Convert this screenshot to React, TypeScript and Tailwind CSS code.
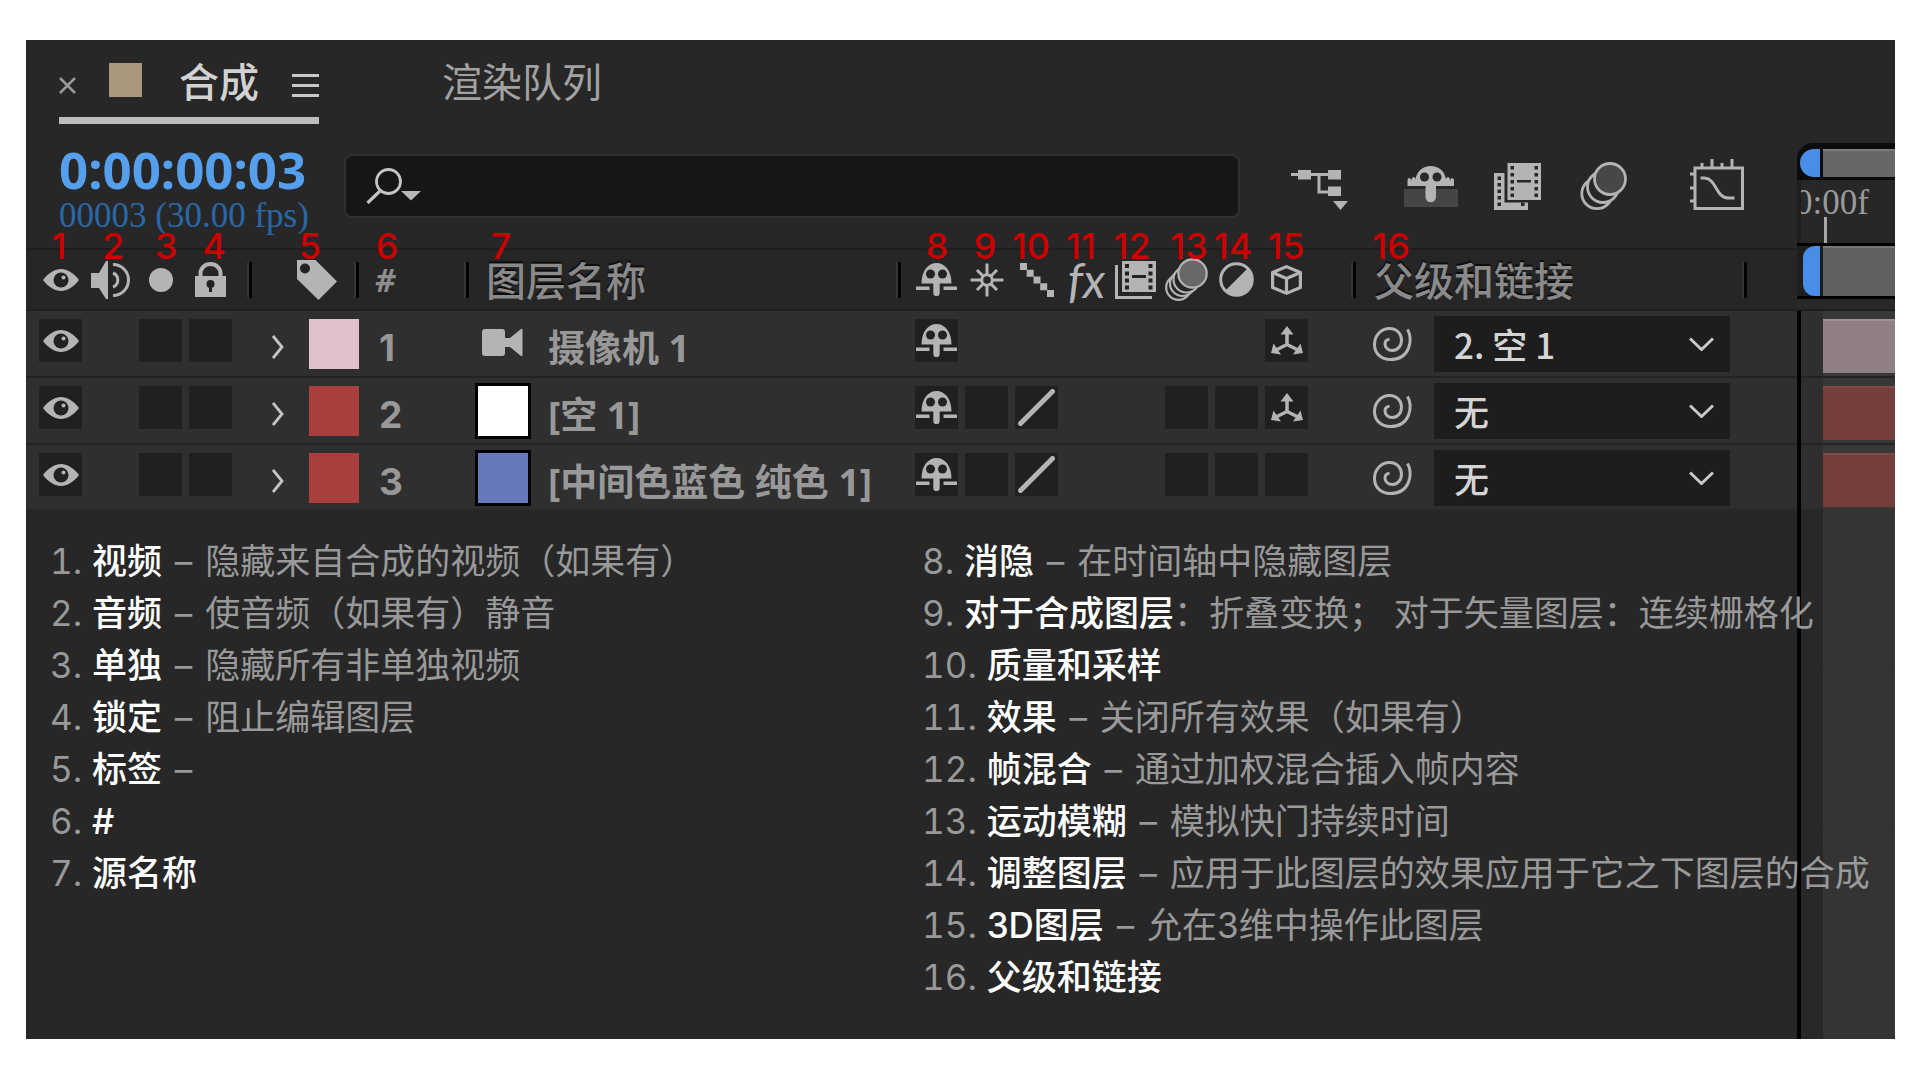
import type { ReactNode } from 'react';
import { clsx } from 'clsx';

interface IconProps {
  className?: string;
}

const EyeIcon = () => (
  <svg width="36" height="24" viewBox="0 0 36 24">
    <path
      d="M0 12C6 4.5 12 1 18 1S30 4.5 36 12C30 19.5 24 23 18 23S6 19.5 0 12Z"
      fill="#b4b4b4"
    />
    <circle cx="18" cy="12" r="7.5" fill="#222" />
    <circle cx="20.5" cy="9.5" r="2" fill="#b4b4b4" />
  </svg>
);

const AudioIcon = () => (
  <svg width="39" height="38" viewBox="0 0 39 38">
    <path d="M0 12h8L15 0h2v38h-2L8 27H0Z" fill="#b4b4b4" />
    <path
      d="M22 12a7.5 7.5 0 0 1 0 14M22 3.5a15.5 15.5 0 0 1 0 31"
      fill="none"
      stroke="#b4b4b4"
      strokeWidth="3"
    />
  </svg>
);

const SoloIcon = () => (
  <svg width="24" height="24" viewBox="0 0 24 24">
    <circle cx="12" cy="12" r="12" fill="#b4b4b4" />
  </svg>
);

const LockIcon = () => (
  <svg width="31" height="35" viewBox="0 0 31 35">
    <path d="M5.500 15V11.500a10 9.500 0 0 1 20 0V15" fill="none" stroke="#b4b4b4" strokeWidth="4" />
    <rect y="14" width="31" height="21" fill="#b4b4b4" />
    <circle cx="15.500" cy="22" r="4" fill="#222" />
    <path d="M14 22h3v8h-3Z" fill="#222" />
  </svg>
);

const TagIcon = () => (
  <svg width="40" height="40" viewBox="0 0 40 40">
    <path d="M0 0h18.500L40 21.500 21.500 40 0 19Z" fill="#b4b4b4" />
    <circle cx="8" cy="8.500" r="5" fill="#222" />
  </svg>
);

const ShyIcon = () => (
  <svg width="41" height="33" viewBox="0 0 41 33">
    <path d="M5.500 20.500C5.500 8 12 0 20.500 0S35.500 8 35.500 20.500Z" fill="#b4b4b4" />
    <path d="M17.300 18h6.400v12a3.200 3.200 0 0 1-6.400 0Z" fill="#b4b4b4" />
    <path d="M0 23.500h13.500v3.500H0ZM27.500 23.500H41v3.500H27.500Z" fill="#b4b4b4" />
    <circle cx="14.500" cy="11" r="4.500" fill="#222" />
    <circle cx="26.500" cy="11" r="4.500" fill="#222" />
  </svg>
);

const SunIcon = () => (
  <svg width="34" height="34" viewBox="0 0 34 34" fill="none" stroke="#b4b4b4" strokeWidth="3">
    <circle cx="17" cy="17" r="5.300" />
    <path d="M17 .5v11M17 22.500v11M.5 17h11M22.500 17h11M7 7l6 6M21 21l6 6M27 7l-6 6M13 21l-6 6" />
  </svg>
);

const QualityIcon = () => (
  <svg width="34" height="34" viewBox="0 0 34 34" fill="#b4b4b4">
    <path d="M0 0h7v7H0ZM6.700 6.700h7v7h-7ZM13.500 13.500h7v7h-7ZM20.200 20.200h7v7h-7ZM27 27h7v7h-7Z" />
  </svg>
);

const FilmIcon = () => (
  <svg width="43" height="38" viewBox="0 0 43 38">
    <path d="M1.500 4v32.500H37" fill="none" stroke="#b4b4b4" strokeWidth="3" />
    <rect x="7" width="34" height="31" fill="#b4b4b4" />
    <path
      d="M10 3h4v4h-4ZM10 10.500h4v4h-4ZM10 17.500h4v4h-4ZM10 24.500h4v4h-4ZM33.500 3h4v4h-4ZM33.500 10.500h4v4h-4ZM33.500 17.500h4v4h-4ZM33.500 24.500h4v4h-4ZM17 14h14v3H17Z"
      fill="#222"
    />
  </svg>
);

const MotionBlurIcon = () => (
  <svg width="43" height="43" viewBox="0 0 43 43" stroke="#b4b4b4" strokeWidth="2.200">
    <circle cx="13.500" cy="29.500" r="12.300" fill="#262626" />
    <circle cx="17.500" cy="25.500" r="12.500" fill="#262626" />
    <circle cx="21.500" cy="21.500" r="13" fill="#262626" />
    <circle cx="27.500" cy="15.500" r="14.200" fill="#686868" />
  </svg>
);

const AdjustmentIcon = () => (
  <svg width="35" height="35" viewBox="0 0 35 35">
    <circle cx="17.500" cy="17.500" r="15.800" fill="none" stroke="#b4b4b4" strokeWidth="3" />
    <path d="M29 6A16.200 16.200 0 0 1 6 29Z" fill="#b4b4b4" />
  </svg>
);

const CubeIcon = () => (
  <svg
    width="31"
    height="30"
    viewBox="0 0 31 30"
    fill="none"
    stroke="#b4b4b4"
    strokeWidth="3.200"
    strokeLinejoin="round">
    <path d="M15.500 1.600 29.400 7.500v15l-13.900 5.900-13.900-5.900v-15ZM1.600 7.500l13.900 6 13.900-6M15.500 13.500v15" />
  </svg>
);

const AxesIcon = () => (
  <svg width="32" height="29" viewBox="0 0 32 29">
    <path d="M16 6v12.500L4 24.500M16 18.500l12 6" fill="none" stroke="#b4b4b4" strokeWidth="3.500" />
    <path
      d="M16 0l6.500 8.500h-13ZM2.500 17.500l7.500 11L0 27ZM29.500 17.500 32 27l-10 1.500Z"
      fill="#b4b4b4"
    />
  </svg>
);

const DraftLineIcon = () => (
  <svg width="37" height="37" viewBox="0 0 37 37">
    <path d="M2.500 34.500l32-32" stroke="#b4b4b4" strokeWidth="5" strokeLinecap="round" />
  </svg>
);

const PickWhipIcon = () => (
  <svg width="39" height="34" viewBox="0 0 39 34" fill="none" stroke="#b4b4b4" strokeWidth="3">
    <path d="M34.500 2.500C40.500 12 37 32.500 17.500 32.500 7.500 32.500 1.500 26 1.500 17.500 1.500 8 8.500 1.500 16.500 1.500c7.500 0 12 5.500 12 11.500 0 6-4 10.500-9 10.500-4.500 0-7.500-3-7.500-6.500 0-3 2-4.500 4.500-4.800" />
  </svg>
);

const CameraIcon = () => (
  <svg width="41" height="27" viewBox="0 0 41 27" fill="#b4b4b4">
    <rect width="23" height="27" rx="3" />
    <path d="M23 9h5L39 0h1.500v27H39L28 18h-5Z" />
  </svg>
);

const TwirlIcon = () => (
  <svg width="12" height="24" viewBox="0 0 12 24">
    <path d="M1 1l9 11-9 11" fill="none" stroke="#c4c4c4" strokeWidth="2.800" />
  </svg>
);

const ChevronDownIcon = ({ className }: IconProps) => (
  <svg className={className} width="25" height="14" viewBox="0 0 25 14">
    <path d="M1 1.500l11.500 11L24 1.500" fill="none" stroke="#c8c8c8" strokeWidth="3" />
  </svg>
);

const SearchIcon = () => (
  <svg width="56" height="36" viewBox="0 0 56 36">
    <circle cx="22.500" cy="13.500" r="12" fill="none" stroke="#c4c4c4" strokeWidth="2.800" />
    <path d="M14.500 22.500L1.500 35" stroke="#c4c4c4" strokeWidth="3.200" />
    <path d="M35 23h20L45 32.500Z" fill="#b8b8b8" />
  </svg>
);

const FlowchartIcon = () => (
  <svg width="58" height="52" viewBox="0 0 58 52" fill="#b4b4b4">
    <path d="M1 15.500h40M29 15.500V33h10" fill="none" stroke="#b4b4b4" strokeWidth="3" />
    <path d="M8 11h13v9.500H8ZM38 11h13v9.500H38ZM38 27.500h13V37H38ZM43 42h15l-7.500 9Z" />
  </svg>
);

const HideShyIcon = () => (
  <svg width="54" height="52" viewBox="0 0 54 52">
    <path d="M0 30h54v18H0Z" fill="#454545" />
    <path
      d="M3.500 27v-5q0-3 1.800-3t1.700 3q1-4 2.500-4t2 2C13 12 19 7 26.800 7S40.500 12 42 20q.5-2 2-2t2.500 4q0-3 1.700-3t1.800 3v5Z"
      fill="#b4b4b4"
    />
    <path d="M21.500 24h10.500v14a5 5 0 0 1-10.500 0Z" fill="#b4b4b4" />
    <circle cx="20.500" cy="18" r="4.500" fill="#272727" />
    <circle cx="33" cy="18" r="4.500" fill="#272727" />
  </svg>
);

const FrameBlendIcon = () => (
  <svg width="47" height="52" viewBox="0 0 47 52">
    <path d="M0 14h10.500v29.500H34V51H0Z" fill="#b4b4b4" />
    <path d="M13.500 4H47v37H13.500Z" fill="#b4b4b4" />
    <path
      d="M3.500 17.500h3.500v3.500H3.500ZM3.500 24h3.500v3.500H3.500ZM3.500 30.500h3.500v3.500H3.500ZM3.500 37h3.500v3.500H3.500ZM3.500 43.500h3.500V47H3.500ZM27 43.500h3.500V47H27ZM16.500 7h3.500v3.500h-3.500ZM16.500 14h3.500v3.500h-3.500ZM16.500 21h3.500v3.500h-3.500ZM16.500 28h3.500v3.500h-3.500ZM16.500 34.500h3.500V38h-3.500ZM40.500 7H44v3.500h-3.500ZM40.500 14H44v3.500h-3.500ZM40.500 21H44v3.500h-3.500ZM40.500 28H44v3.500h-3.500ZM40.500 34.500H44V38h-3.500ZM23 21h14v2.500H23Z"
      fill="#272727"
    />
  </svg>
);

const EnableBlurIcon = () => (
  <svg width="47" height="52" viewBox="0 0 47 52" stroke="#b4b4b4" strokeWidth="2.800">
    <circle cx="17" cy="34.500" r="15.200" fill="#272727" />
    <circle cx="23" cy="28" r="15.500" fill="#272727" />
    <circle cx="30" cy="20" r="15.500" fill="#474747" />
  </svg>
);

const GraphEditorIcon = () => (
  <svg width="54" height="52" viewBox="0 0 54 52" fill="none" stroke="#b4b4b4" strokeWidth="3">
    <path d="M5 9h47.500v40.500H5Z" />
    <path d="M12 4v5M22 0v9M32 4v5M42 0v9M0 15h5M0 29h5M0 42h5" />
    <path d="M10.500 19h4C27 20 25 39 39 39h5.500" />
  </svg>
);

interface Layer {
  index: number;
  name: string;
  label: string;
  bar: string;
  source: 'camera' | 'white' | 'blue';
  parent: string;
  switches: ('shy' | 'empty' | 'draft' | 'axes' | null)[];
}

const layers: Layer[] = [
  {
    index: 1,
    name: '摄像机 1',
    label: 'bg-[#dfc0cb]',
    bar: 'bg-[#8f7e84] border-t-[#a08f95]',
    source: 'camera',
    parent: '2. 空 1',
    switches: ['shy', null, null, null, null, null, null, 'axes'],
  },
  {
    index: 2,
    name: '[空 1]',
    label: 'bg-[#a9403d]',
    bar: 'bg-[#733e3b] border-t-[#804a47]',
    source: 'white',
    parent: '无',
    switches: ['shy', 'empty', 'draft', null, null, 'empty', 'empty', 'axes'],
  },
  {
    index: 3,
    name: '[中间色蓝色 纯色 1]',
    label: 'bg-[#a9403d]',
    bar: 'bg-[#733e3b] border-t-[#804a47]',
    source: 'blue',
    parent: '无',
    switches: ['shy', 'empty', 'draft', null, null, 'empty', 'empty', 'empty'],
  },
];

const switchHeaders = [
  { title: '消隐', icon: <ShyIcon /> },
  { title: '折叠变换', icon: <SunIcon /> },
  { title: '质量和采样', icon: <QualityIcon /> },
  {
    title: '效果',
    icon: <span className="font-[Lato] text-[48px] leading-10 font-normal text-[#b4b4b4] italic">fx</span>,
  },
  { title: '帧混合', icon: <FilmIcon /> },
  { title: '运动模糊', icon: <MotionBlurIcon /> },
  { title: '调整图层', icon: <AdjustmentIcon /> },
  { title: '3D图层', icon: <CubeIcon /> },
];

// centre of every marker, measured from the left edge of its group
const leftMarkers = [
  { n: 1, x: 33 },
  { n: 2, x: 87 },
  { n: 3, x: 140 },
  { n: 4, x: 188 },
  { n: 5, x: 284 },
  { n: 6, x: 361 },
  { n: 7, x: 475 },
];

const rightMarkers = [
  { n: 8, x: 36 },
  { n: 9, x: 84 },
  { n: 10, x: 130 },
  { n: 11, x: 180 },
  { n: 12, x: 231 },
  { n: 13, x: 288 },
  { n: 14, x: 332 },
  { n: 15, x: 385 },
  { n: 16, x: 490 },
];

interface LegendItem {
  title: string;
  text?: string;
  dash?: boolean;
}

const leftLegend: LegendItem[] = [
  { title: '视频', dash: true, text: '隐藏来自合成的视频（如果有）' },
  { title: '音频', dash: true, text: '使音频（如果有）静音' },
  { title: '单独', dash: true, text: '隐藏所有非单独视频' },
  { title: '锁定', dash: true, text: '阻止编辑图层' },
  { title: '标签', dash: true },
  { title: '#' },
  { title: '源名称' },
];

const rightLegend: LegendItem[] = [
  { title: '消隐', dash: true, text: '在时间轴中隐藏图层' },
  { title: '对于合成图层', text: '：折叠变换； 对于矢量图层：连续栅格化' },
  { title: '质量和采样' },
  { title: '效果', dash: true, text: '关闭所有效果（如果有）' },
  { title: '帧混合', dash: true, text: '通过加权混合插入帧内容' },
  { title: '运动模糊', dash: true, text: '模拟快门持续时间' },
  { title: '调整图层', dash: true, text: '应用于此图层的效果应用于它之下图层的合成' },
  { title: '3D图层', dash: true, text: '允在3维中操作此图层' },
  { title: '父级和链接' },
];

const Separator = () => (
  <span className="h-9 w-[3px] shrink-0 bg-black shadow-[-2px_0_0_#343434]" />
);

const Markers = ({ items, className }: { items: typeof leftMarkers; className?: string }) => (
  <div className={clsx('pointer-events-none absolute top-[-20px] z-10', className)}>
    {items.map(({ n, x }) => (
      <span
        key={n}
        style={{ left: x }}
        className="absolute -translate-x-1/2 font-[Inter] text-[36px] leading-9 font-medium text-[#cc0000]">
        {n}
      </span>
    ))}
  </div>
);

const SwitchCell = ({ label, children }: { label: string; children?: ReactNode }) => (
  <button
    type="button"
    aria-label={label}
    className="flex h-[43px] w-[43px] shrink-0 items-center justify-center bg-[#202020]">
    {children}
  </button>
);

const Tabs = () => (
  <div className="flex h-[84px] items-start pt-2 pl-[33px]">
    <div className="flex h-[76px] w-[260px] items-center border-b-[7px] border-[#bdbdbd] pb-[6px]">
      <button type="button" aria-label="关闭" className="mt-3 w-[17px]">
        <svg width="17" height="17" viewBox="0 0 17 17">
          <path d="M1 1l15 15M16 1L1 16" stroke="#9a9a9a" strokeWidth="2.500" />
        </svg>
      </button>
      <span className="ml-[33px] h-[34px] w-[33px] bg-[#a8977a]" />
      <button type="button" className="ml-[37px] text-[40px] leading-[60px] font-medium text-[#d2d2d2]">
        合成
      </button>
      <button type="button" aria-label="菜单" className="mt-3 ml-auto flex w-[27px] flex-col gap-[7px]">
        <span className="h-[3px] bg-[#c8c8c8]" />
        <span className="h-[3px] bg-[#c8c8c8]" />
        <span className="h-[3px] bg-[#c8c8c8]" />
      </button>
    </div>
    <button type="button" className="ml-[123px] h-[64px] text-[40px] leading-[60px] text-[#a2a2a2]">
      渲染队列
    </button>
  </div>
);

const Toolbar = () => (
  <div className="flex h-[124px] items-start pl-[33px]">
    <div className="w-[285px] shrink-0 pt-[22px] whitespace-nowrap">
      <div className="font-['Noto_Sans'] text-[51px] leading-[46px] font-bold text-[#559fec]">
        0:00:00:03
      </div>
      <div className="font-['Liberation_Serif'] text-[35px] leading-12 text-[#2a67a8]">
        00003 (30.00 fps)
      </div>
    </div>
    <label className="mt-[30px] flex h-16 min-w-0 flex-1 items-center rounded-lg border-2 border-[#303030] bg-[#161616] pl-5">
      <SearchIcon />
      <input
        type="text"
        aria-label="搜索"
        className="ml-3 min-w-0 flex-1 bg-transparent text-[34px] text-[#d2d2d2] outline-none"
      />
    </label>
    <div className="mt-[35px] mr-[53px] ml-[50px] flex shrink-0">
      <button type="button" aria-label="合成微型流程图" className="mr-10">
        <FlowchartIcon />
      </button>
      <button type="button" aria-label="隐藏消隐图层" className="flex w-[86px] justify-center">
        <HideShyIcon />
      </button>
      <button type="button" aria-label="启用帧混合" className="flex w-[86px] justify-center">
        <FrameBlendIcon />
      </button>
      <button type="button" aria-label="启用运动模糊" className="flex w-[86px] justify-center">
        <EnableBlurIcon />
      </button>
      <button type="button" aria-label="图表编辑器" className="ml-11">
        <GraphEditorIcon />
      </button>
    </div>
  </div>
);

const headCell = 'h-[63px] border-y-2 border-[#1e1e1e] bg-[#262626] p-0 text-left font-normal';
const headText =
  'pt-[2px] text-[40px] leading-[56px] font-medium text-[#8a8a8a] [text-shadow:0_-2px_1px_#0c0c0c]';

const SourceIcon = ({ source }: { source: Layer['source'] }) => {
  if (source === 'camera') {
    return (
      <span className="flex h-14 w-14 items-center pb-[3px] pl-[7px]">
        <CameraIcon />
      </span>
    );
  }
  return (
    <span
      className={clsx(
        'h-14 w-14 border-[3px] border-black',
        source === 'white' ? 'bg-white' : 'bg-[#6679bd]',
      )}
    />
  );
};

const LayerRow = ({ layer }: { layer: Layer }) => (
  <tr className="h-[67px] bg-[#2f2f2f] align-top last:h-16 [&>td]:border-b-2 [&>td]:border-[#232323] last:[&>td]:border-b-0">
    <td className="p-0">
      <div className="flex gap-[7px] pt-2 pl-[13px]">
        <SwitchCell label="视频">
          <EyeIcon />
        </SwitchCell>
        <span className="w-[43px]" />
        <SwitchCell label="单独" />
        <SwitchCell label="锁定" />
      </div>
    </td>
    <td className="p-0">
      <div className="flex justify-between pt-2 pl-5">
        <button type="button" aria-label="展开" className="pt-[5px]">
          <TwirlIcon />
        </button>
        <span className={clsx('h-[50px] w-[50px]', layer.label)} />
      </div>
    </td>
    <td className="p-0 pt-[11px] pl-5 font-[Inter] text-[37px] leading-[52px] font-bold text-[#989898]">
      {layer.index}
    </td>
    <td className="p-0">
      <div className="flex pt-[5px] pl-[6px]">
        <SourceIcon source={layer.source} />
        <span className="ml-[17px] pt-[6px] text-[37px] leading-[52px] font-bold whitespace-nowrap text-[#989898]">
          {layer.name}
        </span>
      </div>
    </td>
    <td className="p-0">
      <div className="flex gap-[7px] pt-2 pl-[14px]">
        {layer.switches.map((kind, i) =>
          kind ? (
            <SwitchCell key={i} label={switchHeaders[i].title}>
              {kind === 'shy' && <ShyIcon />}
              {kind === 'draft' && <DraftLineIcon />}
              {kind === 'axes' && <AxesIcon />}
            </SwitchCell>
          ) : (
            <span key={i} className="w-[43px]" />
          ),
        )}
      </div>
    </td>
    <td className="p-0">
      <div className="flex pt-[5px] pl-[17px]">
        <button type="button" aria-label="父级关联器" className="h-14">
          <PickWhipIcon />
        </button>
        <div className="relative ml-[22px]">
          <select
            aria-label="父级"
            defaultValue={layer.parent}
            className="h-14 w-[296px] appearance-none bg-[#1d1d1d] pl-5 font-['Noto_Sans_CJK_SC',sans-serif] text-[35px] leading-[52px] font-medium text-[#d4d4d4]">
            <option>{layer.parent}</option>
          </select>
          <ChevronDownIcon className="pointer-events-none absolute top-[21px] right-4" />
        </div>
      </div>
    </td>
  </tr>
);

const LayerTable = () => (
  <div className="relative">
    <Markers items={leftMarkers} className="left-0" />
    <Markers items={rightMarkers} className="right-0 w-[896px]" />
    <table className="w-full table-fixed border-separate border-spacing-0 font-['Noto_Sans','Noto_Sans_CJK_SC',sans-serif]">
      <colgroup>
        <col className="w-[226px]" />
        <col className="w-[107px]" />
        <col className="w-[110px]" />
        <col />
        <col className="w-[455px]" />
        <col className="w-[441px]" />
      </colgroup>
      <thead>
        <tr>
          <th className={headCell}>
            <div className="flex items-center pl-[13px]">
              <div className="flex flex-1 gap-[7px] [&>span]:flex [&>span]:w-[43px] [&>span]:items-center [&>span]:justify-center">
                <span>
                  <EyeIcon />
                </span>
                <span>
                  <AudioIcon />
                </span>
                <span>
                  <SoloIcon />
                </span>
                <span>
                  <LockIcon />
                </span>
              </div>
              <Separator />
            </div>
          </th>
          <th className={headCell}>
            <div className="flex items-center justify-between pl-[45px]">
              <TagIcon />
              <Separator />
            </div>
          </th>
          <th className={headCell}>
            <div className="flex items-center justify-between pl-4">
              <span className="text-[32px] leading-[56px] font-bold text-[#8e8e8e] italic">#</span>
              <Separator />
            </div>
          </th>
          <th className={headCell}>
            <div className="flex items-center justify-between pl-[17px]">
              <span className={headText}>图层名称</span>
              <Separator />
            </div>
          </th>
          <th className={headCell}>
            <div className="flex items-center pl-[14px]">
              <div className="flex flex-1 gap-[7px]">
                {switchHeaders.map(({ title, icon }) => (
                  <span key={title} title={title} className="flex w-[43px] items-center justify-center">
                    {icon}
                  </span>
                ))}
              </div>
              <Separator />
            </div>
          </th>
          <th className={headCell}>
            <div className="flex items-center justify-between pr-[50px] pl-[18px]">
              <span className={headText}>父级和链接</span>
              <Separator />
            </div>
          </th>
        </tr>
      </thead>
      <tbody>
        {layers.map((layer) => (
          <LayerRow key={layer.index} layer={layer} />
        ))}
      </tbody>
    </table>
  </div>
);

const LegendList = ({
  items,
  start,
  className,
}: {
  items: LegendItem[];
  start: number;
  className?: string;
}) => (
  <ul className={className}>
    {items.map(({ title, text, dash }, i) => (
      <li key={title} className="whitespace-pre">
        <span className="tabular-nums">{start + i}.</span>{' '}
        <strong className="font-medium text-white">{title}</strong>
        {dash && <span className="mx-[3px]"> – </span>}
        {text}
      </li>
    ))}
  </ul>
);

const Legend = () => (
  <div className="relative z-10 flex pt-[26px] pb-9 pl-6 font-[Inter,'Noto_Sans_CJK_SC',sans-serif] text-[35px] leading-[52px] text-[#999]">
    <LegendList items={leftLegend} start={1} className="flex-1" />
    <LegendList items={rightLegend} start={8} className="w-[875px] shrink-0" />
  </div>
);

const TimeRuler = () => (
  <aside className="flex w-[98px] shrink-0 flex-col overflow-hidden pt-[103px]">
    <div className="flex h-[37px] gap-[3px] rounded-tl-[16px] bg-[#0c0c0c] pt-[6px] pb-[3px] pl-[3px]">
      <span className="w-5 rounded-l-full bg-[#488ee8]" />
      <span className="flex-1 border-t-2 border-[#7c7c7c] bg-[#676767]" />
    </div>
    <div className="h-[63px] overflow-hidden border-l-4 border-[#1e1e1e]">
      <div className="-ml-[6px] font-['Liberation_Serif'] text-[35px] leading-[46px] text-[#9a9a9a]">0:00f</div>
      <span className="-mt-[9px] ml-[23px] block h-[26px] w-[3px] bg-[#a8a8a8]" />
    </div>
    <div className="flex h-14 gap-[3px] border-y-[3px] border-black bg-[#1e1e1e] pl-[6px]">
      <span className="w-[17px] rounded-l-xl bg-[#488ee8]" />
      <span className="flex-1 border-t-2 border-[#757575] bg-[#616161]" />
    </div>
    <div className="h-3 border-b-2 border-[#1e1e1e] bg-[#282828]" />
    <div className="flex flex-1 flex-col border-l-4 border-black">
      {layers.map(({ index, bar }) => (
        <div
          key={index}
          className="flex h-[67px] shrink-0 border-b-2 border-[#232323] bg-[#2f2f2f] pl-[22px] nth-3:h-16 nth-3:border-b-0">
          <div className="flex-1 bg-[#383838] pt-2">
            <div className={clsx('h-[54px] border-t-2', bar)} />
          </div>
        </div>
      ))}
      <div className="flex flex-1 flex-col bg-[#282828] pl-[22px] [&>div]:bg-[#343434]">
        <div className="h-[163px] border-b border-[#303030]" />
        <div className="h-40 border-b border-[#303030]" />
        <div className="flex-1" />
      </div>
    </div>
  </aside>
);

export default function App() {
  return (
    <main className="min-h-screen bg-white py-10 pr-[25px] pl-[26px] font-['Noto_Sans_CJK_SC',sans-serif]">
      <section className="flex bg-[#272727]">
        <div className="min-w-0 flex-1">
          <Tabs />
          <Toolbar />
          <LayerTable />
          <Legend />
        </div>
        <TimeRuler />
      </section>
    </main>
  );
}
